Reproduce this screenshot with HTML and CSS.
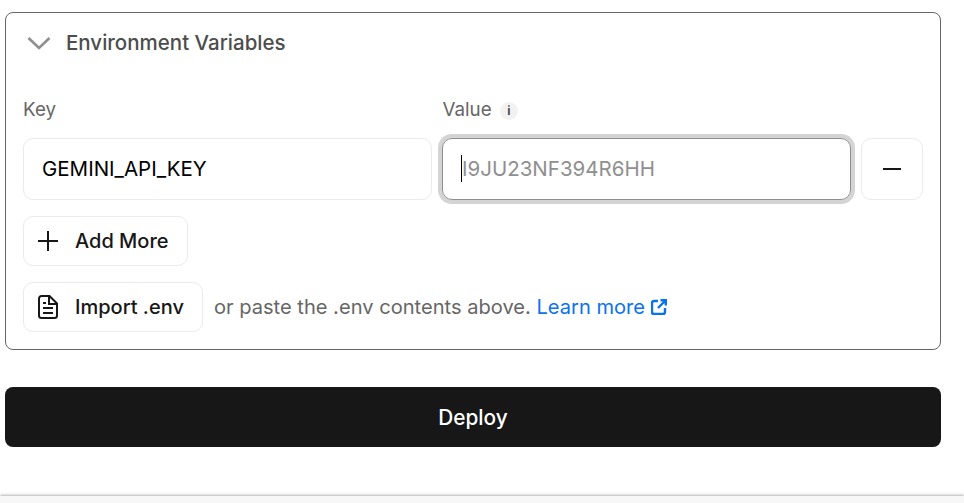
FILE: index.html
```html
<!DOCTYPE html>
<html lang="en">
<head>
  <meta charset="UTF-8">
  <title>Environment Variables</title>
  <link rel="stylesheet" href="styles.css">
</head>
<body>

  <div class="page">
    <!-- Env panel -->
    <div class="panel">
      <div class="panel-header">
        <svg class="chevron" width="24" height="24" viewBox="0 0 24 24" fill="none">
          <path d="M1.5 7 L12 17 L22.5 7" stroke="#8f8f8f" stroke-width="2.6"/>
        </svg>
        <span>Environment Variables</span>
      </div>

      <div class="env-row labels">
        <label class="field-label">Key</label>
        <label class="field-label value-label">Value <span class="info">i</span></label>
        <span class="spacer"></span>
      </div>

      <div class="env-row">
        <div class="field">GEMINI_API_KEY</div>
        <div class="field focused"><span class="caret"></span><span class="placeholder">I9JU23NF394R6HH</span></div>
        <button class="remove-btn">
          <svg width="18" height="18" viewBox="0 0 18 18"><path d="M0 9 H18" stroke="#171717" stroke-width="2"/></svg>
        </button>
      </div>

      <div class="actions">
        <button class="btn add-btn">
          <svg width="20" height="20" viewBox="0 0 20 20" fill="none"><path d="M10 0 V20 M0 10 H20" stroke="#171717" stroke-width="2"/></svg>
          Add More
        </button>
        <div class="import-row">
          <button class="btn import-btn">
            <svg width="20" height="24" viewBox="0 0 20 24" fill="none" stroke="#171717" stroke-width="2">
              <path d="M1 3.5 A2.5 2.5 0 0 1 3.5 1 H11.5 L19 8.5 V20.5 A2.5 2.5 0 0 1 16.5 23 H3.5 A2.5 2.5 0 0 1 1 20.5 Z"/>
              <path d="M11 1 V9 H19 M5 8 H8 M5 13 H15 M5 18 H15"/>
            </svg>
            Import .env
          </button>
          <span class="hint">or paste the .env contents above. <a class="link" href="#">Learn more
            <svg width="16" height="16" viewBox="0 0 16 16" fill="none" stroke="#0a72ef" stroke-width="2.4">
              <path d="M7 2 H3 A2 2 0 0 0 1 4 V13 A2 2 0 0 0 3 15 H12 A2 2 0 0 0 14 13 V9"/>
              <path d="M7 9 L14.5 1.5 M9.5 1.2 H14.8 V6.5"/>
            </svg></a></span>
        </div>
      </div>
    </div>

    <button class="deploy-btn">Deploy</button>
  </div>

  <div class="bottom-band"></div>

</body>
</html>
```

FILE: styles.css
```css
body {
  font-family: Inter, "Liberation Sans", sans-serif;
  background: white;
  margin: 0;
  height: 503px;
  overflow: hidden;
  display: flex;
  flex-direction: column;
}

.page {
  padding: 12px 23px 0 5px;
  flex: 1;
}

.panel {
  border: 1px solid #666;
  border-radius: 8px;
  padding: 0 17px;
  height: 338px;
  box-sizing: border-box;
}

.panel-header {
  display: flex;
  align-items: center;
  height: 60px;
  font-size: 20.5px;
  font-weight: 500;
  color: #4d4d4d;
}

.panel-header span {
  padding-bottom: 2px;
}

.chevron {
  margin: 0 15px 0 4px;
}

.env-row {
  display: flex;
  gap: 10px;
}

.labels {
  margin-top: 24px;
  height: 41px;
}

.labels label {
  flex: 1;
  font-size: 18.8px;
  line-height: 25px;
  color: #666;
}

.value-label {
  padding-left: 1px;
}

.labels .spacer, .remove-btn {
  width: 62px;
  flex: none;
}

.info {
  display: inline-flex;
  align-items: center;
  justify-content: center;
  width: 18px;
  height: 18px;
  margin-left: 3px;
  border-radius: 50%;
  background: #f2f2f2;
  color: #4d4d4d;
  font-size: 12px;
  font-weight: 700;
  vertical-align: 1px;
}

.field {
  flex: 1;
  display: flex;
  align-items: center;
  height: 62px;
  box-sizing: border-box;
  padding: 0 18px 2px;
  border: 1px solid #ebebeb;
  border-radius: 10px;
  font-size: 20.5px;
  color: #000;
}

.field.focused {
  border-color: #8f8f8f;
  box-shadow: 0 0 0 4px #d4d4d4;
}

.caret {
  width: 1px;
  height: 27px;
  background: black;
  flex: none;
}

.placeholder {
  color: #8f8f8f;
}

.remove-btn {
  height: 62px;
  background: white;
  border: 1px solid #ebebeb;
  border-radius: 10px;
  padding: 0;
  display: flex;
  align-items: center;
  justify-content: center;
}

.actions {
  margin-top: 16px;
  display: flex;
  flex-direction: column;
  gap: 16px;
  align-items: flex-start;
}

.btn {
  display: flex;
  align-items: center;
  gap: 17px;
  height: 50px;
  box-sizing: border-box;
  padding: 0 18px 0 14px;
  background: white;
  border: 1px solid #ebebeb;
  border-radius: 10px;
  font-family: inherit;
  font-size: 20px;
  font-weight: 500;
  color: #171717;
}

.import-row {
  display: flex;
  align-items: center;
  gap: 11px;
}

.hint {
  font-size: 20.1px;
  color: #666;
}

.link {
  color: #0a72ef;
  text-decoration: none;
}

.link svg {
  vertical-align: -1px;
}

.deploy-btn {
  display: block;
  width: 100%;
  height: 60px;
  margin-top: 37px;
  background: #171717;
  color: white;
  border: none;
  border-radius: 8px;
  font-family: inherit;
  font-size: 20.8px;
  font-weight: 500;
}

.bottom-band {
  height: 7px;
  background: #f7f7f7;
  box-shadow: 0 -1px 3px rgba(0,0,0,0.3);
}
```
